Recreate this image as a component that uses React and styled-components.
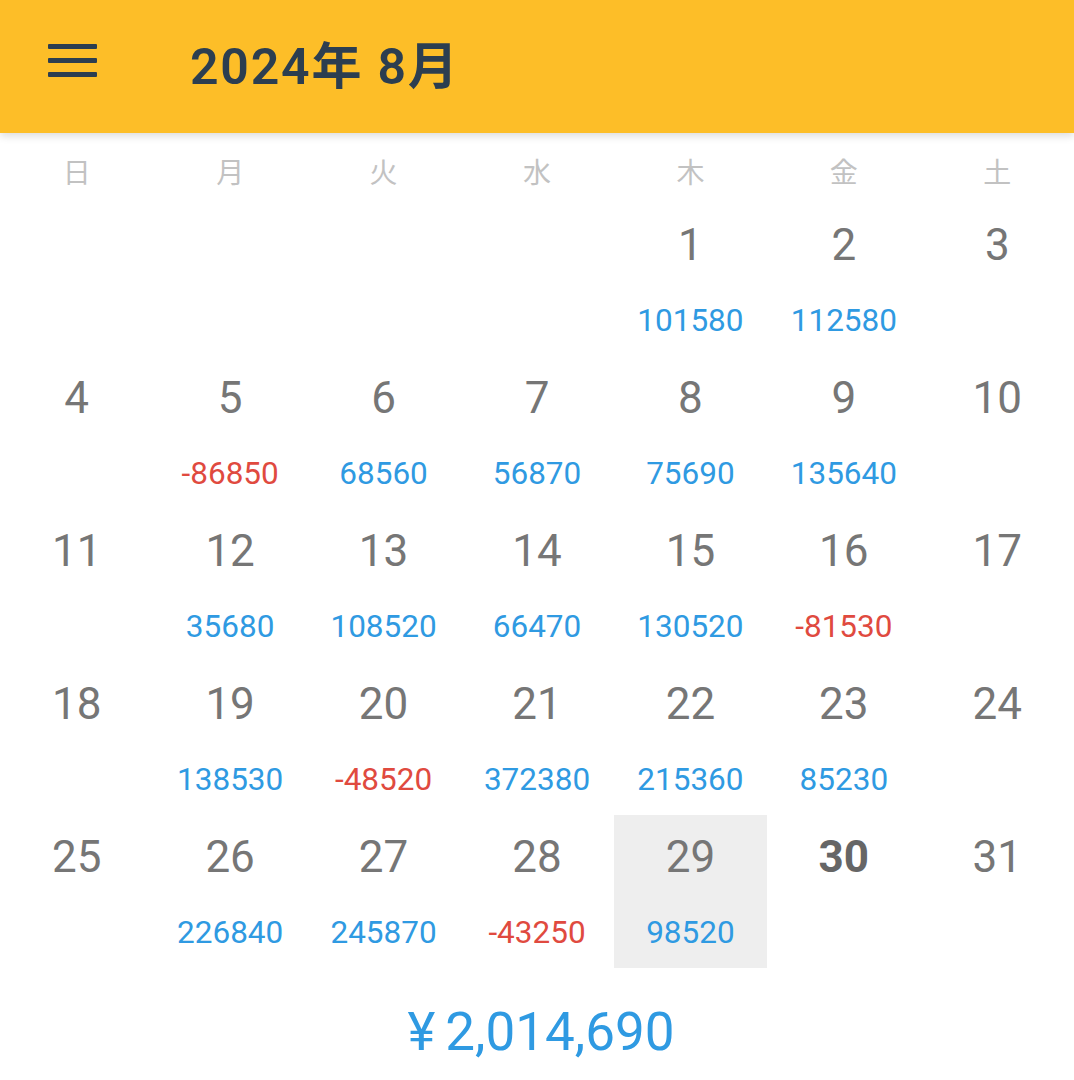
import React from "react";
import styled, { createGlobalStyle } from "styled-components";

const Global = createGlobalStyle`
  html, body { margin: 0; padding: 0; background: #ffffff; }
  body { font-family: Roboto, "Noto Sans CJK JP", sans-serif; }
`;

const Page = styled.div`
  width: 1074px;
  min-height: 1080px;
  background: #fff;
  display: flex;
  flex-direction: column;
`;

const Header = styled.header`
  height: 133px;
  background: #fdbe28;
  display: flex;
  align-items: center;
  padding-left: 48px;
  box-shadow: 0 3px 8px rgba(0, 0, 0, 0.14);
  position: relative;
  z-index: 1;
  box-sizing: border-box;
`;

const MenuButton = styled.div`
  width: 49px;
  display: flex;
  flex-direction: column;
  gap: 9px;
  margin-top: -12px;
`;

const MenuBar = styled.span`
  display: block;
  height: 5px;
  background: #2c3e50;
  border-radius: 1px;
`;

const Title = styled.h1`
  margin: -10px 0 0 93px;
  font-family: Roboto, "Noto Sans CJK JP", sans-serif;
  font-size: 50px;
  font-weight: 600;
  color: #2c3e50;
  letter-spacing: 1.8px;
`;

const WeekRow = styled.div`
  display: grid;
  grid-template-columns: repeat(7, 1fr);
  height: 70px;
  align-items: center;
  padding-top: 6px;
  box-sizing: border-box;
`;

const WeekLabel = styled.div`
  text-align: center;
  font-family: "Noto Sans CJK JP", sans-serif;
  font-size: 28px;
  color: #c2c2c2;
`;

const Grid = styled.div`
  display: grid;
  grid-template-columns: repeat(7, 1fr);
  grid-auto-rows: 153px;
`;

const Cell = styled.div`
  display: flex;
  flex-direction: column;
  align-items: center;
  background: ${(p) => (p.$selected ? "#eeeeee" : "transparent")};
`;

const DayNum = styled.div`
  margin-top: 20px;
  height: 44px;
  line-height: 44px;
  font-size: 44px;
  font-weight: ${(p) => (p.$today ? 700 : 400)};
  color: ${(p) => (p.$today ? "#666666" : "#767676")};
`;

const Amount = styled.div`
  margin-top: 39px;
  height: 30px;
  line-height: 30px;
  font-size: 31.5px;
  color: ${(p) => (p.$neg ? "#e04a3f" : "#2f9ae2")};
`;

const Total = styled.div`
  text-align: center;
  padding-top: 34px;
  padding-left: 8px;
  line-height: 60px;
  font-size: 53px;
  color: #2f9ae2;
  font-family: Roboto, "Noto Sans CJK JP", sans-serif;
`;

const Yen = styled.span`
  margin-right: 10px;
`;

const values = {
  1: 101580, 2: 112580,
  5: -86850, 6: 68560, 7: 56870, 8: 75690, 9: 135640,
  12: 35680, 13: 108520, 14: 66470, 15: 130520, 16: -81530,
  19: 138530, 20: -48520, 21: 372380, 22: 215360, 23: 85230,
  26: 226840, 27: 245870, 28: -43250, 29: 98520,
};

const weekdays = ["日", "月", "火", "水", "木", "金", "土"];

export default function App() {
  const cells = [];
  for (let i = 0; i < 4; i++) cells.push(null);
  for (let d = 1; d <= 31; d++) cells.push(d);

  return (
    <Page>
      <Global />
      <Header>
        <MenuButton>
          <MenuBar />
          <MenuBar />
          <MenuBar />
        </MenuButton>
        <Title>2024年 8月</Title>
      </Header>
      <WeekRow>
        {weekdays.map((w) => (
          <WeekLabel key={w}>{w}</WeekLabel>
        ))}
      </WeekRow>
      <Grid>
        {cells.map((d, i) =>
          d === null ? (
            <Cell key={"e" + i} />
          ) : (
            <Cell key={d} $selected={d === 29}>
              <DayNum $today={d === 30}>{d}</DayNum>
              {values[d] !== undefined && (
                <Amount $neg={values[d] < 0}>{values[d]}</Amount>
              )}
            </Cell>
          )
        )}
      </Grid>
      <Total>
        <Yen>¥</Yen>2,014,690
      </Total>
    </Page>
  );
}
